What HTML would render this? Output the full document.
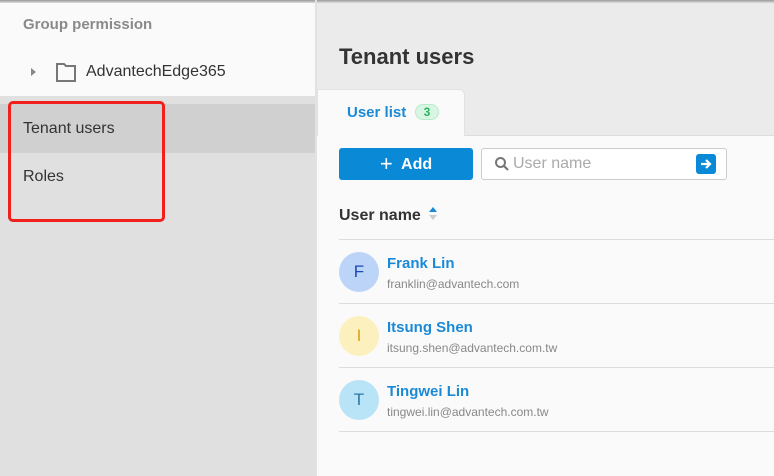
<!DOCTYPE html>
<html><head><style>
*{margin:0;padding:0;box-sizing:border-box}
body{width:774px;height:476px;overflow:hidden;font-family:"Liberation Sans",sans-serif;background:#ebebeb;position:relative}
.abs{position:absolute}
</style></head><body>
<div class="abs" style="left:0;top:0;width:774px;height:3px;background:linear-gradient(#9a9a9a,#ddd)"></div>
<div class="abs" style="left:0;top:3px;width:315px;height:93px;background:#fafafa"></div>
<div class="abs" style="left:0;top:96px;width:315px;height:380px;background:#e0e0e0"></div>
<div class="abs" style="left:0;top:104px;width:315px;height:49px;background:#d0d0d0"></div>
<div class="abs" style="left:315px;top:0;width:2px;height:476px;background:#e2e2e2"></div>
<div class="abs" style="left:23px;top:16px;font-size:15px;font-weight:bold;color:#8a8a8a">Group permission</div>
<div class="abs" style="left:31px;top:68px;width:0;height:0;border-left:5px solid #888;border-top:4px solid transparent;border-bottom:4px solid transparent"></div>
<svg class="abs" style="left:55px;top:61px" width="22" height="22" viewBox="0 0 22 22"><path d="M2 3h7l2 2h9v15H2z" fill="none" stroke="#777" stroke-width="2"/></svg>
<div class="abs" style="left:86px;top:63px;font-size:16px;color:#333">AdvantechEdge365</div>
<div class="abs" style="left:23px;top:120px;font-size:16px;color:#333">Tenant users</div>
<div class="abs" style="left:23px;top:168px;font-size:16px;color:#333">Roles</div>
<div class="abs" style="left:8px;top:101px;width:157px;height:121px;border:3px solid #f0201c;border-radius:5px"></div>

<div class="abs" style="left:339px;top:44px;font-size:22px;font-weight:bold;color:#333">Tenant users</div>
<div class="abs" style="left:317px;top:135px;width:457px;height:341px;background:#fafafa;border-top:1px solid #ddd"></div>
<div class="abs" style="left:317px;top:89px;width:148px;height:47px;background:#fafafa;border:1px solid #e2e2e2;border-bottom:none;border-radius:0 6px 0 0"></div>
<div class="abs" style="left:347px;top:104px;font-size:15px;font-weight:bold;color:#1a8ad6">User list</div>
<div class="abs" style="left:415px;top:104px;width:24px;height:16px;border-radius:8px;background:#d9f5e3;border:1px solid #b8ebc9;color:#2bb55a;font-size:12px;font-weight:bold;text-align:center;line-height:14px">3</div>
<div class="abs" style="left:339px;top:148px;width:134px;height:32px;background:#0a8ad6;border-radius:3px;color:#fff;font-size:16px;font-weight:bold;line-height:32px;text-align:center"><span style="font-size:22px;font-weight:normal;vertical-align:-2px">+</span>&nbsp; Add</div>
<div class="abs" style="left:481px;top:148px;width:246px;height:32px;background:#fff;border:1px solid #ccc;border-radius:3px"></div>
<svg class="abs" style="left:494px;top:156px" width="16" height="16" viewBox="0 0 16 16"><circle cx="6.5" cy="6.5" r="4.5" fill="none" stroke="#777" stroke-width="2"/><path d="M10 10l4 4" stroke="#777" stroke-width="2.2"/></svg>
<div class="abs" style="left:513px;top:155px;font-size:16px;color:#aaa">User name</div>
<div class="abs" style="left:696px;top:154px;width:20px;height:20px;background:#0a8ad6;border-radius:3px"></div>
<svg class="abs" style="left:696px;top:154px" width="20" height="20" viewBox="0 0 20 20"><path d="M5 10h9M10 6l4 4-4 4" stroke="#fff" stroke-width="2.2" fill="none"/></svg>
<div class="abs" style="left:339px;top:207px;font-size:16px;font-weight:bold;color:#333">User name</div>
<div class="abs" style="left:429px;top:207px;border-bottom:5px solid #1a8ad6;border-left:4px solid transparent;border-right:4px solid transparent"></div>
<div class="abs" style="left:429px;top:215px;border-top:5px solid #ccc;border-left:4px solid transparent;border-right:4px solid transparent"></div>
<div class="abs" style="left:339px;top:239px;width:435px;height:1px;background:#ddd"></div>

<div class="abs" style="left:339px;top:252px;width:40px;height:40px;border-radius:50%;background:#bcd4f8;color:#1d49b8;font-size:17px;text-align:center;line-height:40px">F</div>
<div class="abs" style="left:387px;top:255px;font-size:15px;font-weight:bold;color:#1a8ad6">Frank Lin</div>
<div class="abs" style="left:387px;top:277px;font-size:12px;color:#888">franklin@advantech.com</div>
<div class="abs" style="left:339px;top:303px;width:435px;height:1px;background:#ddd"></div>

<div class="abs" style="left:339px;top:316px;width:40px;height:40px;border-radius:50%;background:#fdf0bf;color:#d9a21a;font-size:17px;text-align:center;line-height:40px">I</div>
<div class="abs" style="left:387px;top:319px;font-size:15px;font-weight:bold;color:#1a8ad6">Itsung Shen</div>
<div class="abs" style="left:387px;top:341px;font-size:12px;color:#888">itsung.shen@advantech.com.tw</div>
<div class="abs" style="left:339px;top:367px;width:435px;height:1px;background:#ddd"></div>

<div class="abs" style="left:339px;top:380px;width:40px;height:40px;border-radius:50%;background:#b9e3f6;color:#2a78a8;font-size:17px;text-align:center;line-height:40px">T</div>
<div class="abs" style="left:387px;top:383px;font-size:15px;font-weight:bold;color:#1a8ad6">Tingwei Lin</div>
<div class="abs" style="left:387px;top:405px;font-size:12px;color:#888">tingwei.lin@advantech.com.tw</div>
<div class="abs" style="left:339px;top:431px;width:435px;height:1px;background:#ddd"></div>
</body></html>
